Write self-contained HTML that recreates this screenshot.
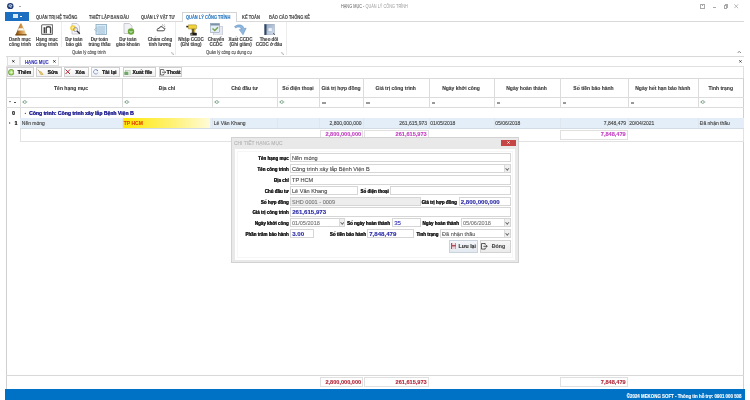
<!DOCTYPE html>
<html><head><meta charset="utf-8">
<style>
*{box-sizing:border-box;margin:0;padding:0}
html,body{width:750px;height:400px;overflow:hidden;background:#fff;font-family:"Liberation Sans",sans-serif;color:#333}
body{-webkit-text-stroke-width:0.12px}
#root{position:absolute;left:0;top:0;width:750px;height:400px;will-change:transform}
.a{position:absolute}
.t{position:absolute;white-space:nowrap;line-height:1}
.hl{position:absolute;height:1px;background:#d9d9d9}
.vl{position:absolute;width:1px;background:#d9d9d9}
.tab{position:absolute;top:13px;font-size:4.7px;font-weight:bold;color:#4a4a4a;transform:scaleX(0.85);transform-origin:0 0;white-space:nowrap;line-height:1}
.rb{position:absolute;font-size:4.5px;font-weight:bold;color:#444;text-align:center;line-height:5px;white-space:nowrap}
.grp{position:absolute;top:50.5px;font-size:4.6px;color:#4a4a4a;transform:scaleX(0.9);transform-origin:0 0;white-space:nowrap;line-height:1}
.btn{position:absolute;top:67px;height:10px;border:1px solid #cfcfcf;background:linear-gradient(#fff,#f1f1f1);font-size:5.1px;font-weight:bold;color:#444;line-height:8px;white-space:nowrap}
.hd{position:absolute;top:85.7px;font-size:5px;font-weight:bold;color:#3c3c3c;white-space:nowrap;line-height:1;text-align:center}
.cell{position:absolute;font-size:5px;color:#444;white-space:nowrap;line-height:1}
.lbl{position:absolute;font-size:4.5px;font-weight:bold;color:#222;text-shadow:0.15px 0 0 #222;margin-top:1.8px;white-space:nowrap;line-height:1;text-align:right}
.inp{position:absolute;height:9.5px;border:1px solid #d6d6d6;background:#fff;font-size:5.7px;letter-spacing:-0.15px;color:#484848;line-height:8px;padding-left:1.2px;white-space:nowrap;overflow:hidden}
.it{display:inline-block;font-size:6.2px;letter-spacing:0;transform:scaleX(0.9);transform-origin:0 50%}
.dd{position:absolute;top:0;right:0;width:5.8px;height:100%;border-left:1px solid #dadada;background:#f0f0f0}
.dd:after{content:"";position:absolute;left:1.35px;top:1.9px;width:1.5px;height:1.5px;border-right:0.6px solid #6a6a6a;border-bottom:0.6px solid #6a6a6a;transform:rotate(45deg)}
.blue{color:#2a2aa8;font-weight:bold;font-size:6.1px;letter-spacing:0}
</style></head><body><div id="root">

<!-- title bar -->
<svg class="a" style="left:7.3px;top:3.1px" width="6.6" height="6.4" viewBox="0 0 6.6 6.4"><ellipse cx="3.3" cy="3.2" rx="3.2" ry="3.1" fill="#1d3a72"/><path d="M1.8 3.4 Q1.8 1.6 3.4 1.6 Q4.8 1.6 4.9 3 L2.6 3.3 Q2.8 4.6 4.6 4.2" fill="none" stroke="#e8eef8" stroke-width="0.8"/></svg>
<svg class="a" style="left:18.8px;top:5.6px" width="2" height="1.4" viewBox="0 0 2 1.4"><path d="M0 0 H2 L1 1.4 Z" fill="#777"/></svg>
<div class="t" style="left:341.3px;top:4.5px;font-size:4.6px;color:#5a5a5a;-webkit-text-stroke-width:0;transform:scaleX(0.84);transform-origin:0 0">HẠNG MỤC - <span style="color:#9a9a9a">QUẢN LÝ CÔNG TRÌNH</span></div>
<!-- window controls -->
<div class="a" style="left:699.5px;top:4px;width:5.5px;height:5px;border:0.7px solid #aaa"></div><div class="a" style="left:701.5px;top:5px;width:1.5px;height:1.5px;border-top:0.6px solid #aaa"></div>
<div class="a" style="left:713px;top:6.8px;width:3px;height:0.6px;background:#aaa"></div>
<div class="a" style="left:723.5px;top:5px;width:3.5px;height:3.5px;border:0.6px solid #aaa"></div><div class="a" style="left:724.5px;top:4px;width:3.5px;height:3.5px;border-top:0.6px solid #aaa;border-right:0.6px solid #aaa"></div>
<svg class="a" style="left:734px;top:4px" width="4.5" height="4.5" viewBox="0 0 4.5 4.5"><path d="M0.3 0.3 L4.2 4.2 M4.2 0.3 L0.3 4.2" stroke="#8a8a8a" stroke-width="0.6"/></svg>

<!-- ribbon tabs -->
<div class="a" style="left:5px;top:12px;width:24px;height:8.5px;background:#1c6fc0"></div>
<div class="a" style="left:13px;top:14px;width:5px;height:4px;background:#dbe9f7"></div>
<div class="a" style="left:20px;top:16px;width:1.5px;height:0.7px;background:#fff"></div>
<div class="tab" style="left:36px;top:15.9px">QUẢN TRỊ HỆ THỐNG</div>
<div class="tab" style="left:89px;top:15.9px">THIẾT LẬP BAN ĐẦU</div>
<div class="tab" style="left:140.5px;top:15.9px">QUẢN LÝ VẬT TƯ</div>
<div class="a" style="left:181.5px;top:11.5px;width:55px;height:10px;border:1px solid #d4d4d4;border-bottom:none;background:#fff"></div>
<div class="tab" style="left:186px;top:15.9px;color:#2b79c2">QUẢN LÝ CÔNG TRÌNH</div>
<div class="tab" style="left:241.5px;top:15.9px">KẾ TOÁN</div>
<div class="tab" style="left:269px;top:15.9px">BÁO CÁO THỐNG KÊ</div>
<div class="hl" style="left:29px;top:20.5px;width:152.5px"></div>
<div class="hl" style="left:236.5px;top:20.5px;width:507.5px"></div>

<!-- ribbon content -->

<svg class="a" style="left:14.5px;top:22.5px" width="12" height="13" viewBox="0 0 12 13">
<defs><linearGradient id="cg" x1="0" x2="1"><stop offset="0" stop-color="#6a3a08"/><stop offset="0.45" stop-color="#c88a3a"/><stop offset="1" stop-color="#f0d4a0"/></linearGradient></defs>
<path d="M5.3 0.5 L6.5 0.5 L11.6 12.2 L0.4 12.2 Z" fill="url(#cg)"/>
<path d="M3.7 5.2 L8.2 5.2 L9.1 7.4 L2.8 7.4 Z" fill="#fff8ee"/>
<path d="M0.4 11.2 L11.6 11.2 L11.6 12.4 L0.4 12.4 Z" fill="#7a4a10"/>
</svg>
<svg class="a" style="left:40.5px;top:24px" width="12.5" height="11" viewBox="0 0 12.5 11">
<rect x="0.6" y="0.8" width="11" height="9.6" rx="1" fill="#fff" stroke="#6d6d6d" stroke-width="1.1"/>
<rect x="2.6" y="3.2" width="1.4" height="6" fill="#444"/>
<path d="M5.2 9.2 V4.2 Q5.2 2.8 7.4 2.8 Q9.6 2.8 9.6 4.2 V9.2" fill="none" stroke="#444" stroke-width="1.4"/>
<path d="M10.2 0.2 L12.2 0.2 L12.2 2.2 Z" fill="#888"/>
</svg>
<svg class="a" style="left:68.5px;top:23px" width="12" height="12" viewBox="0 0 12 12">
<path d="M3 0.5 H8 L10.5 3 V11 H3 Z" fill="#f4f4f8" stroke="#b8b8c8" stroke-width="0.7"/>
<circle cx="4" cy="5" r="2.8" fill="#f2cf3c"/><circle cx="4" cy="5" r="1.4" fill="#fbe98a"/>
<circle cx="6.5" cy="6.5" r="2" fill="none" stroke="#8a8a9a" stroke-width="0.8"/>
<path d="M8 8 L10.8 10.8" stroke="#333" stroke-width="1.3"/>
</svg>
<svg class="a" style="left:93.5px;top:23.5px" width="13" height="11" viewBox="0 0 13 11">
<rect x="2" y="0.5" width="10.5" height="10" fill="#d8ecf8" stroke="#8aaac0" stroke-width="0.8"/>
<path d="M3.5 3 H11 M3.5 5 H11 M3.5 7 H11 M3.5 9 H11" stroke="#6f98b8" stroke-width="0.55"/>
<path d="M0.3 5.5 L2.8 3.5 V7.5 Z" fill="#c8dcea" stroke="#8aaac0" stroke-width="0.5"/>
</svg>
<svg class="a" style="left:123px;top:23px" width="12" height="12" viewBox="0 0 12 12">
<path d="M1 0.5 H6.5 L9 3 V10.5 H1 Z" fill="#f2f2f6" stroke="#b8b8c4" stroke-width="0.7"/>
<circle cx="8" cy="8.5" r="3.2" fill="#6aaa3c"/><path d="M6.6 8 L8 9.6 L9.4 8" fill="none" stroke="#fff" stroke-width="0.8"/>
</svg>
<svg class="a" style="left:155.5px;top:23.5px" width="10" height="8" viewBox="0 0 10 8">
<path d="M1.2 6.8 H7.2 Q8.6 6.8 8.6 5.4 Q8.6 4 7.2 4 Q6.8 2.4 5 2.6 Q3.6 2.8 3.4 4.2 Q1.2 4.2 1.2 5.6 Z" fill="#fff" stroke="#222" stroke-width="0.8"/>
<path d="M6.2 1.6 L6.6 0.4 M8 2.6 L9.2 2 M8.4 4.2 L9.6 4.4 M7.6 1.4 L8.4 0.6" stroke="#333" stroke-width="0.5"/>
</svg>
<svg class="a" style="left:185.5px;top:23.5px" width="12" height="12" viewBox="0 0 12 12">
<rect x="0.3" y="1.8" width="2.2" height="1.6" fill="#222"/>
<path d="M2.4 0.8 H9.6 Q10.6 0.8 10.6 2 V4 Q10.6 5 9.6 5 H2.4 Z" fill="#f2d23a" stroke="#6a5a10" stroke-width="0.35"/>
<path d="M5.6 5 H9.2 L8.6 9 H6.4 Z" fill="#e9c52e" stroke="#555" stroke-width="0.35"/>
<rect x="6.4" y="5" width="1.2" height="4" fill="#2a2a2a"/>
<rect x="4.4" y="8.8" width="6.4" height="2.8" rx="0.6" fill="#1a1a1a"/>
<rect x="5.2" y="9.6" width="1.2" height="1.2" fill="#e0c040"/>
</svg>
<svg class="a" style="left:209.5px;top:22.8px" width="13" height="12.5" viewBox="0 0 13 12.5">
<rect x="3.5" y="3.5" width="9" height="8.6" fill="#e8eaf2" stroke="#b4b8cc" stroke-width="0.6"/>
<rect x="0.5" y="0.5" width="9" height="9" fill="#e4eef6" stroke="#8fa2b8" stroke-width="0.6"/>
<rect x="0.5" y="0.5" width="9" height="2" fill="#7f92aa"/>
<path d="M2.5 5.5 L4.8 7.6 L8 4.2" fill="none" stroke="#79a24a" stroke-width="1.4"/>
</svg>
<svg class="a" style="left:233.5px;top:24px" width="13" height="11.5" viewBox="0 0 13 11.5">
<path d="M0.5 2.6 Q3 0.2 7 1 Q9.4 1.6 10 4.4 L12.2 4.2 L9 10.8 L5.2 5.6 L7.4 5.4 Q7 3.6 5.6 3.2 Q3.6 2.6 1.6 4 Z" fill="#8fb6dc" stroke="#5f8fbc" stroke-width="0.5"/>
</svg>
<svg class="a" style="left:263.5px;top:23.5px" width="12" height="11.5" viewBox="0 0 12 11.5">
<defs><linearGradient id="bk" x1="0" x2="1" y1="0" y2="1"><stop offset="0" stop-color="#8ea4c2"/><stop offset="1" stop-color="#d6e0ec"/></linearGradient></defs>
<rect x="0.5" y="0.3" width="9.8" height="10.6" fill="url(#bk)" stroke="#7a8ca6" stroke-width="0.4"/>
<rect x="0.5" y="0.3" width="2" height="10.6" fill="#34465f"/>
<rect x="4.6" y="4.2" width="3.2" height="2.8" fill="#f2f6fb"/>
<path d="M9 9 L11.4 11.2" stroke="#555" stroke-width="0.9"/>
</svg>

<div class="rb" style="left:4px;top:37.1px;width:32px">Danh mục<br>công trình</div>
<div class="rb" style="left:31px;top:37.1px;width:32px">Hạng mục<br>công trình</div>
<div class="vl" style="left:61px;top:22px;height:25px;background:#ececec"></div>
<div class="rb" style="left:58px;top:37.1px;width:32px">Dự toán<br>báo giá</div>
<div class="rb" style="left:83.5px;top:37.1px;width:32px">Dự toán<br>trúng thầu</div>
<div class="rb" style="left:112px;top:37.1px;width:32px">Dự toán<br>giao khoán</div>
<div class="rb" style="left:144px;top:37.1px;width:32px">Chấm công<br>tính lương</div>
<div class="grp" style="left:72px">Quản lý công trình</div>
<svg class="a" style="left:171px;top:51.6px" width="3" height="3" viewBox="0 0 3 3"><path d="M0.3 0.3 H1.6 M0.3 0.3 V1.6 M0.8 0.8 L2.6 2.6 M2.7 1.4 V2.7 H1.4" fill="none" stroke="#999" stroke-width="0.5"/></svg>
<div class="vl" style="left:175px;top:22px;height:33px;background:#ececec"></div>
<div class="rb" style="left:175px;top:37.1px;width:32px">Nhập CCDC<br>(Ghi tăng)</div>
<div class="rb" style="left:200px;top:37.1px;width:32px">Chuyển<br>CCDC</div>
<div class="rb" style="left:224.5px;top:37.1px;width:32px">Xuất CCDC<br>(Ghi giảm)</div>
<div class="rb" style="left:253px;top:37.1px;width:32px">Theo dõi<br>CCDC ở đâu</div>
<div class="grp" style="left:206px">Quản lý công cụ dụng cụ</div>
<svg class="a" style="left:280.5px;top:51.6px" width="3" height="3" viewBox="0 0 3 3"><path d="M0.3 0.3 H1.6 M0.3 0.3 V1.6 M0.8 0.8 L2.6 2.6 M2.7 1.4 V2.7 H1.4" fill="none" stroke="#999" stroke-width="0.5"/></svg>
<div class="vl" style="left:286px;top:22px;height:33px;background:#ececec"></div>
<svg class="a" style="left:737px;top:50.5px" width="4.5" height="2.5" viewBox="0 0 4.5 2.5"><path d="M0.3 2.2 L2.25 0.4 L4.2 2.2" fill="none" stroke="#555" stroke-width="0.7"/></svg>
<div class="hl" style="left:6px;top:56px;width:738px"></div>

<!-- doc tabs -->
<div class="a" style="left:6.5px;top:56.5px;width:13.5px;height:9px;border:1px solid #e0e0e0;border-top:none;background:#fafafa"></div>
<svg class="a" style="left:12px;top:60.3px" width="2.7" height="2.7" viewBox="0 0 2.7 2.7"><path d="M0.3 0.3 L2.4000000000000004 2.4000000000000004 M2.4000000000000004 0.3 L0.3 2.4000000000000004" stroke="#222" stroke-width="0.95"/></svg>
<div class="a" style="left:20px;top:56.5px;width:39px;height:9.5px;border:1px solid #e0e0e0;border-top:none;background:#fff"></div>
<div class="t" style="left:24.5px;top:60.6px;font-size:4.9px;font-weight:bold;color:#3a3ab8;transform:scaleX(0.88);transform-origin:0 0">HẠNG MỤC</div>
<svg class="a" style="left:53px;top:60px" width="2.8" height="2.8" viewBox="0 0 2.8 2.8"><path d="M0.3 0.3 L2.5 2.5 M2.5 0.3 L0.3 2.5" stroke="#222" stroke-width="0.95"/></svg>
<svg class="a" style="left:739.4px;top:60.1px" width="2.8" height="2.8" viewBox="0 0 2.8 2.8"><path d="M0.3 0.3 L2.5 2.5 M2.5 0.3 L0.3 2.5" stroke="#333" stroke-width="0.85"/></svg>
<div class="hl" style="left:59px;top:65.5px;width:685px;background:#e6e6e6"></div>

<!-- toolbar -->
<div class="a" style="left:5.5px;top:66px;width:738px;height:12px;border:1px solid #e0e0e0;border-bottom:none"></div>
<div class="btn" style="left:7px;width:26.5px"></div>
<svg class="a" style="left:7.8px;top:69px" width="6.5" height="6.5" viewBox="0 0 6.5 6.5"><circle cx="3.25" cy="3.25" r="2.8" fill="#a6d86a" stroke="#5f9a35" stroke-width="0.8"/><path d="M3.25 1.6 V4.9 M1.6 3.25 H4.9" stroke="#eaf6dc" stroke-width="0.9"/></svg>
<div class="t" style="left:17.6px;top:70.3px;font-size:5.1px;font-weight:bold;color:#333;text-shadow:0.2px 0 0 #333">Thêm</div>
<div class="btn" style="left:36.3px;width:25.5px"></div>
<svg class="a" style="left:37.4px;top:68.8px" width="6.5" height="6.5" viewBox="0 0 6.5 6.5"><path d="M0.8 0.6 L3.2 3.4" stroke="#8a6a2a" stroke-width="0.6"/><path d="M2.4 3.2 L4 2.4 L6.2 5.6 L4.4 6.3 Z" fill="#e8c860" stroke="#b89030" stroke-width="0.4"/></svg>
<div class="t" style="left:47.6px;top:70.3px;font-size:5.1px;font-weight:bold;color:#333;text-shadow:0.2px 0 0 #333">Sửa</div>
<div class="btn" style="left:63.7px;width:25px"></div>
<svg class="a" style="left:65px;top:69.2px" width="5.5" height="5.5" viewBox="0 0 5.5 5.5"><path d="M0.5 0.5 L5 5 M5 0.5 L0.5 5" stroke="#b42434" stroke-width="1"/></svg>
<div class="t" style="left:75.2px;top:70.3px;font-size:5.1px;font-weight:bold;color:#333;text-shadow:0.2px 0 0 #333">Xóa</div>
<div class="btn" style="left:91.3px;width:29px"></div>
<svg class="a" style="left:93px;top:69.2px" width="5.5" height="5.5" viewBox="0 0 5.5 5.5"><path d="M4.6 1.6 A2.2 2.2 0 1 0 4.8 3.6" fill="none" stroke="#7a9ad0" stroke-width="0.9"/><path d="M3.6 0.4 L5.2 1.2 L4 2.4 Z" fill="#5a7ab8"/></svg>
<div class="t" style="left:102px;top:70.3px;font-size:5.1px;font-weight:bold;color:#333;text-shadow:0.2px 0 0 #333">Tải lại</div>
<div class="btn" style="left:122.9px;width:33.5px"></div>
<svg class="a" style="left:124.2px;top:69.5px" width="6.5" height="5.5" viewBox="0 0 6.5 5.5"><rect x="1.5" y="0.4" width="4.6" height="4.8" fill="#e4efe0" stroke="#9ab890" stroke-width="0.5"/><rect x="0.3" y="1.8" width="4" height="3.4" rx="0.6" fill="#6fa86a"/></svg>
<div class="t" style="left:132.4px;top:70.3px;font-size:5.1px;font-weight:bold;color:#333;text-shadow:0.2px 0 0 #333">Xuất file</div>
<div class="btn" style="left:158.7px;width:23.7px"></div>
<svg class="a" style="left:159.6px;top:69px" width="6.5" height="6.5" viewBox="0 0 6.5 6.5"><path d="M3.6 1.6 V0.5 H0.5 V6 H3.6 V4.9" fill="none" stroke="#333" stroke-width="0.7"/><path d="M2 3.25 H5.6 M4.4 2.1 L5.8 3.25 L4.4 4.4" fill="none" stroke="#333" stroke-width="0.7"/></svg>
<div class="t" style="left:166.6px;top:70.3px;font-size:5.1px;font-weight:bold;color:#333;text-shadow:0.2px 0 0 #333">Thoát</div>

<!-- grid -->
<div class="a" style="left:5.5px;top:77.5px;width:738.5px;height:312px;border-left:1px solid #d0d0d0;border-right:1px solid #d0d0d0;border-top:1px solid #d9d9d9"></div>
<div class="hl" style="left:6px;top:97px;width:737.5px;background:#dcdcdc"></div>
<div class="hl" style="left:6px;top:107px;width:737.5px;background:#dcdcdc"></div>
<div class="vl" style="left:20px;top:78px;height:29.5px;background:#dcdcdc"></div>
<div class="vl" style="left:122px;top:78px;height:29.5px;background:#dcdcdc"></div>
<div class="vl" style="left:212px;top:78px;height:29.5px;background:#dcdcdc"></div>
<div class="vl" style="left:277px;top:78px;height:29.5px;background:#dcdcdc"></div>
<div class="vl" style="left:319px;top:78px;height:29.5px;background:#dcdcdc"></div>
<div class="vl" style="left:363px;top:78px;height:29.5px;background:#dcdcdc"></div>
<div class="vl" style="left:428.5px;top:78px;height:29.5px;background:#dcdcdc"></div>
<div class="vl" style="left:493.5px;top:78px;height:29.5px;background:#dcdcdc"></div>
<div class="vl" style="left:559.5px;top:78px;height:29.5px;background:#dcdcdc"></div>
<div class="vl" style="left:627.5px;top:78px;height:29.5px;background:#dcdcdc"></div>
<div class="vl" style="left:698px;top:78px;height:29.5px;background:#dcdcdc"></div>
<div class="hd" style="left:20px;width:102px">Tên hạng mục</div>
<div class="hd" style="left:122px;width:90px">Địa chỉ</div>
<div class="hd" style="left:212px;width:65px">Chủ đầu tư</div>
<div class="hd" style="left:277px;width:42px">Số điện thoại</div>
<div class="hd" style="left:319px;width:44px">Giá trị hợp đồng</div>
<div class="hd" style="left:363px;width:65.5px">Giá trị công trình</div>
<div class="hd" style="left:428.5px;width:65.0px">Ngày khởi công</div>
<div class="hd" style="left:493.5px;width:66.0px">Ngày hoàn thành</div>
<div class="hd" style="left:559.5px;width:68.0px">Số tiền bảo hành</div>
<div class="hd" style="left:627.5px;width:70.5px">Ngày hết hạn bảo hành</div>
<div class="hd" style="left:698px;width:45.5px">Tình trạng</div>
<svg class="a" style="left:8.6px;top:101.3px" width="2" height="1.6" viewBox="0 0 2 1.6"><path d="M0 0 H2 L1 1.6 Z" fill="#555"/></svg>
<div class="a" style="left:14px;top:102.3px;width:1.6px;height:0.7px;background:#555"></div>
<svg class="a" style="left:22.3px;top:100.2px" width="5.6" height="4" viewBox="0 0 5.6 4"><circle cx="2.8" cy="2" r="1.4" fill="none" stroke="#6f9a80" stroke-width="0.8"/><path d="M0.2 2 H1.2 M4.4 2 H5.4" stroke="#6f9a80" stroke-width="0.7"/></svg>
<svg class="a" style="left:124.3px;top:100.2px" width="5.6" height="4" viewBox="0 0 5.6 4"><circle cx="2.8" cy="2" r="1.4" fill="none" stroke="#6f9a80" stroke-width="0.8"/><path d="M0.2 2 H1.2 M4.4 2 H5.4" stroke="#6f9a80" stroke-width="0.7"/></svg>
<svg class="a" style="left:214.3px;top:100.2px" width="5.6" height="4" viewBox="0 0 5.6 4"><circle cx="2.8" cy="2" r="1.4" fill="none" stroke="#6f9a80" stroke-width="0.8"/><path d="M0.2 2 H1.2 M4.4 2 H5.4" stroke="#6f9a80" stroke-width="0.7"/></svg>
<svg class="a" style="left:279.3px;top:100.2px" width="5.6" height="4" viewBox="0 0 5.6 4"><circle cx="2.8" cy="2" r="1.4" fill="none" stroke="#6f9a80" stroke-width="0.8"/><path d="M0.2 2 H1.2 M4.4 2 H5.4" stroke="#6f9a80" stroke-width="0.7"/></svg>
<div class="a" style="left:322px;top:101.6px;width:3.6px;height:1.4px;border-top:0.5px solid #999;border-bottom:0.5px solid #999"></div>
<div class="a" style="left:366px;top:101.6px;width:3.6px;height:1.4px;border-top:0.5px solid #999;border-bottom:0.5px solid #999"></div>
<div class="a" style="left:431.5px;top:101.6px;width:3.6px;height:1.4px;border-top:0.5px solid #999;border-bottom:0.5px solid #999"></div>
<div class="a" style="left:496.5px;top:101.6px;width:3.6px;height:1.4px;border-top:0.5px solid #999;border-bottom:0.5px solid #999"></div>
<div class="a" style="left:562.5px;top:101.6px;width:3.6px;height:1.4px;border-top:0.5px solid #999;border-bottom:0.5px solid #999"></div>
<div class="a" style="left:630.5px;top:101.6px;width:3.6px;height:1.4px;border-top:0.5px solid #999;border-bottom:0.5px solid #999"></div>
<svg class="a" style="left:700.3px;top:100.2px" width="5.6" height="4" viewBox="0 0 5.6 4"><circle cx="2.8" cy="2" r="1.4" fill="none" stroke="#6f9a80" stroke-width="0.8"/><path d="M0.2 2 H1.2 M4.4 2 H5.4" stroke="#6f9a80" stroke-width="0.7"/></svg>
<div class="vl" style="left:20px;top:107px;height:11px;background:#dcdcdc"></div>
<div class="t" style="left:12px;top:110.5px;font-size:5px;font-weight:bold;color:#333;text-shadow:0.2px 0 0 #333">0</div>
<svg class="a" style="left:24px;top:112px" width="2.4" height="2.4" viewBox="0 0 2.4 2.4"><path d="M2.4 0 V2.4 H0 Z" fill="#555"/></svg>
<div class="t" style="left:29px;top:110.5px;font-size:5.1px;font-weight:bold;color:#2a2a96;text-shadow:0.2px 0 0 #2a2a96">Công trình: Công trình xây lắp Bệnh Viện B</div>
<svg class="a" style="left:9.2px;top:122.3px" width="1.6" height="2" viewBox="0 0 1.6 2"><path d="M0 0 V2 L1.6 1 Z" fill="#555"/></svg>
<div class="t" style="left:14.5px;top:121px;font-size:5px;font-weight:bold;color:#333;text-shadow:0.2px 0 0 #333">1</div>
<div class="a" style="left:20px;top:118px;width:723.5px;height:10.5px;background:#e4eef8;border-bottom:1px solid #d3dbe4"></div>
<div class="a" style="left:122px;top:118px;width:88px;height:9.7px;background:linear-gradient(90deg,#ffe800 0%,#fff27a 60%,#fffbd8 100%)"></div>
<div class="vl" style="left:122px;top:118px;height:10px;background:#dfe6ee"></div>
<div class="vl" style="left:212px;top:118px;height:10px;background:#dfe6ee"></div>
<div class="vl" style="left:277px;top:118px;height:10px;background:#dfe6ee"></div>
<div class="vl" style="left:319px;top:118px;height:10px;background:#dfe6ee"></div>
<div class="vl" style="left:363px;top:118px;height:10px;background:#dfe6ee"></div>
<div class="vl" style="left:428.5px;top:118px;height:10px;background:#dfe6ee"></div>
<div class="vl" style="left:493.5px;top:118px;height:10px;background:#dfe6ee"></div>
<div class="vl" style="left:559.5px;top:118px;height:10px;background:#dfe6ee"></div>
<div class="vl" style="left:627.5px;top:118px;height:10px;background:#dfe6ee"></div>
<div class="vl" style="left:698px;top:118px;height:10px;background:#dfe6ee"></div>
<div class="cell" style="left:21.8px;top:121.3px;">Nền móng</div>
<div class="cell" style="left:123.8px;top:121.3px;font-weight:bold;color:#e04a00;">TP HCM</div>
<div class="cell" style="left:213.8px;top:121.3px;">Lê Văn Khang</div>
<div class="cell" style="left:319px;width:42.5px;text-align:right;top:121.3px">2,800,000,000</div>
<div class="cell" style="left:363px;width:64.0px;text-align:right;top:121.3px">261,615,973</div>
<div class="cell" style="left:430.3px;top:121.3px;">01/05/2018</div>
<div class="cell" style="left:495.3px;top:121.3px;">05/06/2018</div>
<div class="cell" style="left:559.5px;width:66.5px;text-align:right;top:121.3px">7,848,479</div>
<div class="cell" style="left:629.3px;top:121.3px;">20/04/2021</div>
<div class="cell" style="left:699.8px;top:121.3px;">Đã nhận thầu</div>
<div class="a" style="left:20px;top:128.5px;width:723.5px;height:13.3px;border:1px solid #e2e2e2;border-top:none"></div>
<div class="a" style="left:319.5px;top:130.3px;width:43.5px;height:9.5px;border:1px solid #e0e0e0"></div>
<div class="cell" style="left:319px;width:42.2px;text-align:right;top:132.4px;font-weight:bold;font-size:5.6px;color:#c23fc2">2,800,000,000</div>
<div class="a" style="left:363.5px;top:130.3px;width:65.0px;height:9.5px;border:1px solid #e0e0e0"></div>
<div class="cell" style="left:363px;width:63.7px;text-align:right;top:132.4px;font-weight:bold;font-size:5.6px;color:#c23fc2">261,615,973</div>
<div class="a" style="left:560.0px;top:130.3px;width:67.5px;height:9.5px;border:1px solid #e0e0e0"></div>
<div class="cell" style="left:559.5px;width:66.2px;text-align:right;top:132.4px;font-weight:bold;font-size:5.6px;color:#c23fc2">7,848,479</div>
<div class="hl" style="left:6px;top:375px;width:737.5px;background:#d9d9d9"></div>
<div class="a" style="left:319.5px;top:376.7px;width:43.5px;height:10.5px;border:1px solid #e0e0e0"></div>
<div class="cell" style="left:319px;width:42.2px;text-align:right;top:379.9px;font-weight:bold;font-size:5.6px;color:#b3283a">2,800,000,000</div>
<div class="a" style="left:363.5px;top:376.7px;width:65.0px;height:10.5px;border:1px solid #e0e0e0"></div>
<div class="cell" style="left:363px;width:63.7px;text-align:right;top:379.9px;font-weight:bold;font-size:5.6px;color:#b3283a">261,615,973</div>
<div class="a" style="left:560.0px;top:376.7px;width:67.5px;height:10.5px;border:1px solid #e0e0e0"></div>
<div class="cell" style="left:559.5px;width:66.2px;text-align:right;top:379.9px;font-weight:bold;font-size:5.6px;color:#b3283a">7,848,479</div>

<!-- status bar -->
<div class="a" style="left:5px;top:389.2px;width:740px;height:10.8px;background:#0072c6"></div>
<div class="t" style="right:8.3px;top:394.5px;font-size:4.9px;font-weight:bold;color:#fff;transform:scaleX(0.9);transform-origin:100% 0">©2024 MEKONG SOFT - Thông tin hỗ trợ: 0901 000 508</div>

<!-- dialog -->
<div class="a" style="left:231px;top:137px;width:287.6px;height:126.2px;background:#e9e9e9;border:1px solid #d2d2d2"></div>
<div class="a" style="left:234.6px;top:149.3px;width:280.4px;height:110.5px;background:#fff"></div>
<div class="a" style="left:237px;top:151px;width:276px;height:106.6px;border:1px solid #f6f6f6"></div>
<div class="t" style="left:234.4px;top:141.1px;font-size:5.3px;color:#b4b4b4;transform:scaleX(0.93);transform-origin:0 0">CHI TIẾT HẠNG MỤC</div>
<div class="a" style="left:501.3px;top:139.9px;width:14.3px;height:5.8px;background:#c64545"></div>
<svg class="a" style="left:507px;top:141.3px" width="3" height="3" viewBox="0 0 3 3"><path d="M0.3 0.3 L2.7 2.7 M2.7 0.3 L0.3 2.7" stroke="#fff" stroke-width="0.8"/></svg>
<div class="lbl" style="right:461.3px;top:155.5px">Tên hạng mục</div>
<div class="inp " style="left:290px;top:153.3px;width:220.7px;height:9.199999999999989px;"><span class="it">Nền móng</span></div>
<div class="lbl" style="right:461.3px;top:166.5px">Tên công trình</div>
<div class="inp " style="left:290px;top:164.3px;width:220.7px;height:9.199999999999989px;"><span class="it">Công trình xây lắp Bệnh Viện B</span><span class="dd"></span></div>
<div class="lbl" style="right:461.3px;top:177.6px">Địa chỉ</div>
<div class="inp " style="left:290px;top:175.3px;width:220.7px;height:9.399999999999977px;"><span class="it">TP HCM</span></div>
<div class="lbl" style="right:461.3px;top:188.2px">Chủ đầu tư</div>
<div class="inp " style="left:290px;top:186px;width:68.30000000000001px;height:9.199999999999989px;"><span class="it">Lê Văn Khang</span></div>
<div class="lbl" style="right:361.3px;top:188.2px">Số điện thoại</div>
<div class="inp " style="left:390.4px;top:186px;width:120.30000000000001px;height:9.199999999999989px;"></div>
<div class="lbl" style="right:461.3px;top:198.85px">Số hợp đồng</div>
<div class="inp " style="left:290px;top:196.7px;width:130.7px;height:9.100000000000023px;background:#ededed;color:#777;"><span class="it">SHD 0001 - 0009</span></div>
<div class="lbl" style="right:293.2px;top:198.85px">Giá trị hợp đồng</div>
<div class="inp blue" style="left:458.5px;top:196.7px;width:52.19999999999999px;height:9.100000000000023px;">2,800,000,000</div>
<div class="lbl" style="right:461.3px;top:209.6px">Giá trị công trình</div>
<div class="inp blue" style="left:290px;top:207.4px;width:220.7px;height:9.199999999999989px;">261,615,973</div>
<div class="lbl" style="right:461.3px;top:220.45px">Ngày khởi công</div>
<div class="inp " style="left:290px;top:218.2px;width:55.30000000000001px;height:9.3px;color:#777;"><span class="it">01/05/2018</span><span class="dd"></span></div>
<div class="lbl" style="right:360px;top:220.45px">Số ngày hoàn thành</div>
<div class="inp blue" style="left:392px;top:218.2px;width:28.7px;height:9.3px;font-weight:normal;color:#3535b8">35</div>
<div class="lbl" style="right:291.1px;top:220.45px">Ngày hoàn thành</div>
<div class="inp " style="left:460.6px;top:218.2px;width:50.099999999999966px;height:9.300000000000011px;color:#777;"><span class="it">05/06/2018</span><span class="dd"></span></div>
<div class="lbl" style="right:461.3px;top:231.29999999999998px">Phần trăm bảo hành</div>
<div class="inp blue" style="left:290px;top:229.2px;width:24.399999999999977px;height:9.0px;">3.00</div>
<div class="lbl" style="right:384px;top:231.29999999999998px">Số tiền bảo hành</div>
<div class="inp blue" style="left:367px;top:229.2px;width:47px;height:9.0px;">7,848,479</div>
<div class="lbl" style="right:311.6px;top:231.29999999999998px">Tình trạng</div>
<div class="inp " style="left:440.1px;top:229.2px;width:70.6px;height:9px;color:#5a5a5a;"><span class="it">Đã nhận thầu</span><span class="dd"></span></div>
<div class="a" style="left:448.9px;top:240.4px;width:28.9px;height:12.3px;border:1px solid #c9d3de;background:linear-gradient(#f4f7fa,#e3e9ef)"></div>
<svg class="a" style="left:450.7px;top:243.2px" width="5.6" height="6" viewBox="0 0 5.6 6"><rect x="0" y="0" width="5.6" height="6" fill="#b54a58"/><rect x="1.2" y="0" width="3.2" height="2" fill="#f0dfe2"/><rect x="1" y="3.4" width="3.6" height="2.6" fill="#e8d0d4"/></svg>
<div class="t" style="left:458.6px;top:244.1px;font-size:5.2px;font-weight:bold;color:#333">Lưu lại</div>
<div class="a" style="left:479.9px;top:240.4px;width:30.8px;height:12.3px;border:1px solid #d3d3d3;background:linear-gradient(#f7f7f7,#ebebeb)"></div>
<svg class="a" style="left:480.8px;top:243px" width="7" height="6.6" viewBox="0 0 7 6.6"><path d="M4.2 1.8 V0.5 H0.5 V6.1 H4.2 V4.8" fill="none" stroke="#333" stroke-width="0.8"/><path d="M2.4 3.3 H6.2 M4.8 2 L6.3 3.3 L4.8 4.6" fill="none" stroke="#333" stroke-width="0.8"/></svg>
<div class="t" style="left:491.8px;top:244.1px;font-size:5.2px;font-weight:bold;color:#444">Đóng</div>

</div></body></html>
